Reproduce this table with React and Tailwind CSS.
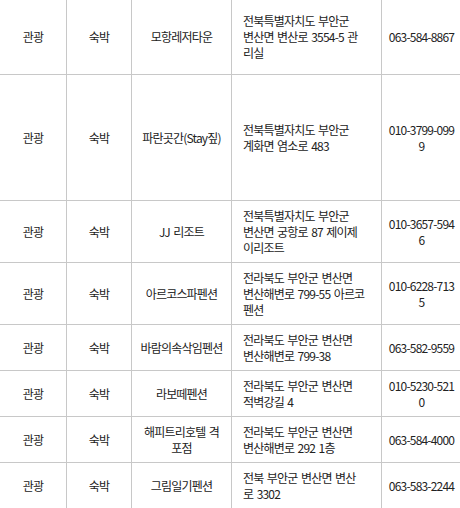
import React from "react";

const rows = [
  {
    h: "h-[75px]",
    name: ["모항레저타운"],
    addr: ["전북특별자치도 부안군", "변산면 변산로 3554-5 관", "리실"],
    tel: ["063-584-8867"],
  },
  {
    h: "h-[126px]",
    name: ["파란곳간(Stay짚)"],
    addr: ["전북특별자치도 부안군", "계화면 염소로 483"],
    tel: ["010-3799-099", "9"],
  },
  {
    h: "h-[62px]",
    name: ["JJ 리조트"],
    addr: ["전북특별자치도 부안군", "변산면 궁항로 87 제이제", "이리조트"],
    tel: ["010-3657-594", "6"],
  },
  {
    h: "h-[62px]",
    name: ["아르코스파펜션"],
    addr: ["전라북도 부안군 변산면", "변산해변로 799-55 아르코", "펜션"],
    tel: ["010-6228-713", "5"],
  },
  {
    h: "h-[46px]",
    name: ["바람의속삭임펜션"],
    addr: ["전라북도 부안군 변산면", "변산해변로 799-38"],
    tel: ["063-582-9559"],
  },
  {
    h: "h-[46px]",
    name: ["라보떼펜션"],
    addr: ["전라북도 부안군 변산면", "적벽강길 4"],
    tel: ["010-5230-521", "0"],
  },
  {
    h: "h-[46px]",
    name: ["해피트리호텔 격", "포점"],
    addr: ["전라북도 부안군 변산면", "변산해변로 292 1층"],
    tel: ["063-584-4000"],
  },
  {
    h: "h-[46px]",
    name: ["그림일기펜션"],
    addr: ["전북 부안군 변산면 변산", "로 3302"],
    tel: ["063-583-2244"],
  },
];

function Lines({ items }) {
  return items.map((t, i) => (
    <span key={i} className="block whitespace-nowrap">
      {t}
    </span>
  ));
}

export default function App() {
  return (
    <div
      className="w-[460px] h-[508px] overflow-hidden bg-white text-[#222] text-[12px] leading-[16px] tracking-[-0.8px] [word-spacing:1.5px]"
      style={{ fontFamily: '"Noto Sans CJK KR", "Noto Sans", sans-serif' }}
    >
      {rows.map((r, i) => (
        <div key={i} className={`flex ${r.h} border-b border-[#c8c8c8]`}>
          <div className="w-[67px] shrink-0 border-r border-[#c8c8c8] flex items-center justify-center">
            관광
          </div>
          <div className="w-[65px] shrink-0 border-r border-[#c8c8c8] flex items-center justify-center">
            숙박
          </div>
          <div className="w-[100px] shrink-0 border-r border-[#c8c8c8] flex flex-col items-center justify-center text-center">
            <Lines items={r.name} />
          </div>
          <div className="w-[150px] shrink-0 border-r border-[#c8c8c8] flex flex-col justify-center pl-[11px]">
            <Lines items={r.addr} />
          </div>
          <div className="w-[79px] shrink-0 flex flex-col items-center justify-center text-center">
            <Lines items={r.tel} />
          </div>
        </div>
      ))}
    </div>
  );
}
